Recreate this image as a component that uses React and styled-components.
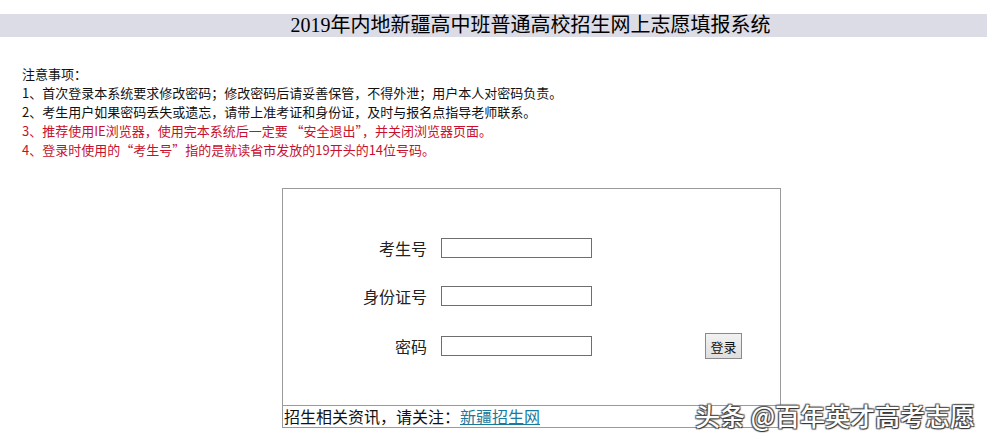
import styled, { createGlobalStyle } from "styled-components"

const GlobalStyle = createGlobalStyle`
    html, body {
        margin: 0;
        padding: 0;
        background: #ffffff;
    }
    body {
        font-family: "Liberation Sans", "Noto Sans CJK SC", sans-serif;
        color: #111;
    }
`

const notices = [
    { text: "1、首次登录本系统要求修改密码；修改密码后请妥善保管，不得外泄；用户本人对密码负责。", red: false },
    { text: "2、考生用户如果密码丢失或遗忘，请带上准考证和身份证，及时与报名点指导老师联系。", red: false },
    { text: "3、推荐使用IE浏览器，使用完本系统后一定要 “安全退出”，并关闭浏览器页面。", red: true },
    { text: "4、登录时使用的“考生号”指的是就读省市发放的19开头的14位号码。", red: true },
]

const fields = [
    { label: "考生号", top: 46, button: false },
    { label: "身份证号", top: 22, button: false },
    { label: "密码", top: 24, button: true },
]

export default function App() {
    return (
        <Page>
            <GlobalStyle />
            <TitleBar>2019年内地新疆高中班普通高校招生网上志愿填报系统</TitleBar>

            <Notice>
                <NoticeLine>注意事项：</NoticeLine>
                {notices.map((n, i) => (
                    <NoticeLine key={i} $red={n.red}>{n.text}</NoticeLine>
                ))}
            </Notice>

            <LoginBox>
                <Form>
                    {fields.map((f, i) => (
                        <Row key={i} $top={f.top}>
                            <Label>{f.label}</Label>
                            <Input type={f.label === "密码" ? "password" : "text"} />
                            {f.button && <Button type="button">登录</Button>}
                        </Row>
                    ))}
                </Form>
                <Footer>
                    招生相关资讯，请关注：<FooterLink href="#">新疆招生网</FooterLink>
                </Footer>
            </LoginBox>

            <Watermark>头条 @百年英才高考志愿</Watermark>
        </Page>
    )
}

const Page = styled.div`
    position: relative;
    width: 987px;
    height: 443px;
    overflow: hidden;
    padding-top: 14px;
    box-sizing: border-box;
`

const TitleBar = styled.div`
    height: 23px;
    background: #dcdce6;
    padding-left: 74px;
    text-align: center;
    font-family: "Liberation Serif", "Noto Sans CJK SC", serif;
    font-size: 20px;
    line-height: 23px;
    color: #000;
`

const Notice = styled.div`
    margin-top: 27px;
    padding-left: 22px;
`

const NoticeLine = styled.div`
    font-family: "Noto Sans CJK SC", sans-serif;
    font-size: 13px;
    line-height: 19px;
    height: 19px;
    color: ${p => (p.$red ? "#c8102e" : "#111")};
`

const LoginBox = styled.div`
    margin-top: 29px;
    margin-left: 282px;
    width: 499px;
    height: 240px;
    box-sizing: border-box;
    border: 1px solid #9a9a9a;
    display: flex;
    flex-direction: column;
`

const Form = styled.div`
    flex: 1;
    display: flex;
    flex-direction: column;
`

const Row = styled.div`
    display: flex;
    align-items: center;
    height: 26px;
    margin-top: ${p => p.$top}px;
`

const Label = styled.div`
    width: 144px;
    text-align: right;
    font-size: 16px;
    color: #222;
    font-family: "Noto Sans CJK SC", sans-serif;
`

const Input = styled.input`
    margin: 0 0 0 14px;
    width: 151px;
    height: 20px;
    box-sizing: border-box;
    border: 1px solid #6e6e6e;
    background: #fff;
    padding: 0 3px;
    outline: none;
`

const Button = styled.button`
    margin-left: 113px;
    width: 37px;
    height: 26px;
    padding: 0;
    box-sizing: border-box;
    border: 1px solid #8a8a8a;
    background: linear-gradient(#f2f2f2, #dedede);
    font-family: "Noto Sans CJK SC", sans-serif;
    font-size: 13px;
    color: #111;
`

const Footer = styled.div`
    height: 21px;
    border-top: 1px solid #9a9a9a;
    padding-left: 1px;
    font-family: "Noto Sans CJK SC", sans-serif;
    font-size: 16px;
    line-height: 21px;
    color: #111;
    white-space: nowrap;
`

const FooterLink = styled.a`
    color: #1a7a9c;
    text-decoration: underline;
`

const Watermark = styled.div`
    position: absolute;
    left: 695px;
    top: 400px;
    font-family: "Noto Sans CJK SC", sans-serif;
    font-size: 25px;
    font-weight: 500;
    line-height: 30px;
    color: #fff;
    white-space: nowrap;
    text-shadow: 1px 1px 1px #333, -1px -1px 1px #555, 1px -1px 1px #555, -1px 1px 1px #555;
`
